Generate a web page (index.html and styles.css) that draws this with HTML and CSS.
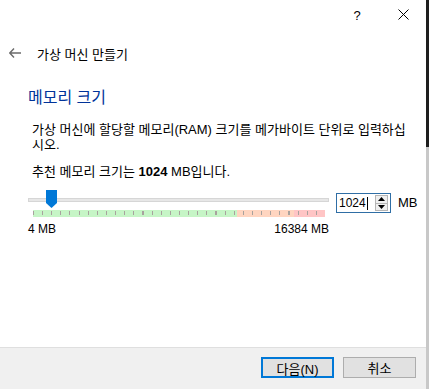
FILE: index.html
```html
<!DOCTYPE html>
<html lang="ko">
<head>
<meta charset="utf-8">
<link rel="stylesheet" href="styles.css">
</head>
<body>
<div class="window">
  <div class="dialog">
    <div class="titlebar">
      <div class="cap-btn">?</div>
      <div class="cap-btn close">
        <svg width="11" height="11" viewBox="0 0 11 11"><path d="M0.5 0.5 L10.5 10.5 M10.5 0.5 L0.5 10.5" stroke="#000" stroke-width="1" fill="none"/></svg>
      </div>
    </div>
    <div class="header">
      <svg class="back" width="12" height="10" viewBox="0 0 12 10"><path d="M5 0.5 L0.8 5 L5 9.5 M0.8 5 H12" stroke="#6b6b6b" stroke-width="1.4" fill="none"/></svg>
      <span class="title">가상 머신 만들기</span>
    </div>
    <div class="content">
      <h1 class="heading">메모리 크기</h1>
      <p class="desc">가상 머신에 할당할 메모리(RAM) 크기를 메가바이트 단위로 입력하십시오.</p>
      <p class="rec">추천 메모리 크기는 <b>1024</b> MB입니다.</p>
      <div class="slider-row">
        <div class="slider">
          <div class="track"></div>
          <div class="thumb"></div>
          <div class="ticks">
            <div class="zone green"></div>
            <div class="zone orange"></div>
            <div class="zone red"></div>
            <div class="marks"></div>
          </div>
        </div>
        <div class="spin">
          <span class="val">1024<span class="caret"></span></span>
          <div class="arrows">
            <div class="arr"><svg width="7" height="4" viewBox="0 0 7 4"><path d="M0 4 L3.5 0 L7 4 Z" fill="#000"/></svg></div>
            <div class="arr"><svg width="7" height="4" viewBox="0 0 7 4"><path d="M0 0 L3.5 4 L7 0 Z" fill="#000"/></svg></div>
          </div>
        </div>
        <span class="unit">MB</span>
      </div>
      <div class="labels">
        <span>4 MB</span>
        <span>16384 MB</span>
      </div>
    </div>
    <div class="footer">
      <button class="btn primary">다음(N)</button>
      <button class="btn">취소</button>
    </div>
  </div>
  <div class="edge">
    <div class="edge-dark"></div>
    <div class="edge-light"></div>
  </div>
</div>
</body>
</html>
```

FILE: styles.css
```css
* { box-sizing: border-box; }
html, body { margin: 0; padding: 0; }
body {
  width: 429px;
  height: 389px;
  overflow: hidden;
  background: #fff;
  font-family: "Liberation Sans", "Noto Sans CJK KR", sans-serif;
  font-size: 13px;
  color: #000;
}
.window { display: flex; height: 389px; }
.dialog {
  width: 426px;
  height: 389px;
  display: flex;
  flex-direction: column;
  background: #fff;
  flex-shrink: 0;
}
.edge { width: 3px; display: flex; flex-direction: column; flex-shrink: 0; }
.edge-dark { height: 147px; background: #1e1e1e; }
.edge-light { flex: 1; background: #c8c8c8; }

.titlebar { height: 30px; display: flex; justify-content: flex-end; }
.cap-btn {
  width: 46px; height: 30px;
  display: flex; align-items: center; justify-content: center;
  font-size: 13px;
}
.cap-btn.close { padding-bottom: 2px; }

.header {
  height: 46px;
  display: flex;
  align-items: center;
  padding-left: 9px;
}
.back { margin-right: 16px; }
.title { font-size: 13px; }

.content { padding-left: 28px; padding-right: 0; }
.heading {
  margin: 12px 0 0 0;
  font-size: 16px;
  font-weight: normal;
  color: #003399;
  line-height: 20px;
}
.desc {
  margin: 14px 0 0 4px;
  line-height: 15px;
  width: 376px;
}
.rec { margin: 12px 0 0 4px; line-height: 15px; }
.rec b { font-weight: bold; }

.slider-row {
  margin-top: 13px;
  display: flex;
  align-items: flex-start;
  height: 30px;
}
.slider { position: relative; width: 301px; height: 30px; flex-shrink: 0; }
.track {
  position: absolute; left: 0; top: 6px;
  width: 301px; height: 4px;
  background: #e7e7e7;
  border: 1px solid #d6d6d6;
}
.thumb {
  position: absolute; left: 18px; top: -2px;
  width: 11px; height: 18px;
  background: #0078d7;
  clip-path: polygon(0 0, 100% 0, 100% 72%, 50% 100%, 0 72%);
}
.ticks {
  position: absolute; left: 5px; top: 18px;
  width: 292px; height: 7px;
  display: flex;
}
.zone.green { width: 204px; background: #c6f5c6; }
.zone.orange { width: 57px; background: #ffd5c0; }
.zone.red { flex: 1; background: #ffc5c5; }
.marks {
  position: absolute; left: 0; top: 1px; width: 292px; height: 4px;
  background-image: repeating-linear-gradient(to right, #a8a29e 0, #a8a29e 1px, transparent 1px, transparent 9.125px);
}
.spin {
  margin-left: 7px;
  margin-top: 1px;
  width: 55px; height: 20px;
  flex-shrink: 0;
  border: 1px solid #2f6ea5;
  display: flex; align-items: center;
  justify-content: space-between;
  padding-left: 2px;
  padding-right: 2px;
}
.val { display: flex; align-items: center; font-size: 12px; }
.caret { display: inline-block; width: 1px; height: 13px; background: #000; margin-left: 1px; }
.arrows {
  width: 13px; height: 16px;
  border: 1px solid #b5b5b5;
  background: #efefef;
  display: flex; flex-direction: column;
}
.arr { flex: 1; display: flex; align-items: center; justify-content: center; }
.arr + .arr { border-top: 1px solid #b5b5b5; }
.unit { margin-left: 7px; margin-top: 3px; flex-shrink: 0; }

.labels {
  width: 301px;
  display: flex;
  justify-content: space-between;
  line-height: 15px;
  font-size: 12px;
}

.footer {
  margin-top: auto;
  height: 42px;
  border-top: 1px solid #dfdfdf;
  background: #f0f0f0;
  display: flex;
  justify-content: flex-end;
  align-items: flex-start;
  padding: 9px 10px 0 0;
  gap: 9px;
}
.btn {
  width: 73px; height: 21px;
  font-family: "Liberation Sans", "Noto Sans CJK KR", sans-serif;
  font-size: 13px;
  background: #e1e1e1;
  border: 1px solid #adadad;
  padding: 0;
  color: #000;
}
.btn.primary { border: 2px solid #0078d7; }
```
